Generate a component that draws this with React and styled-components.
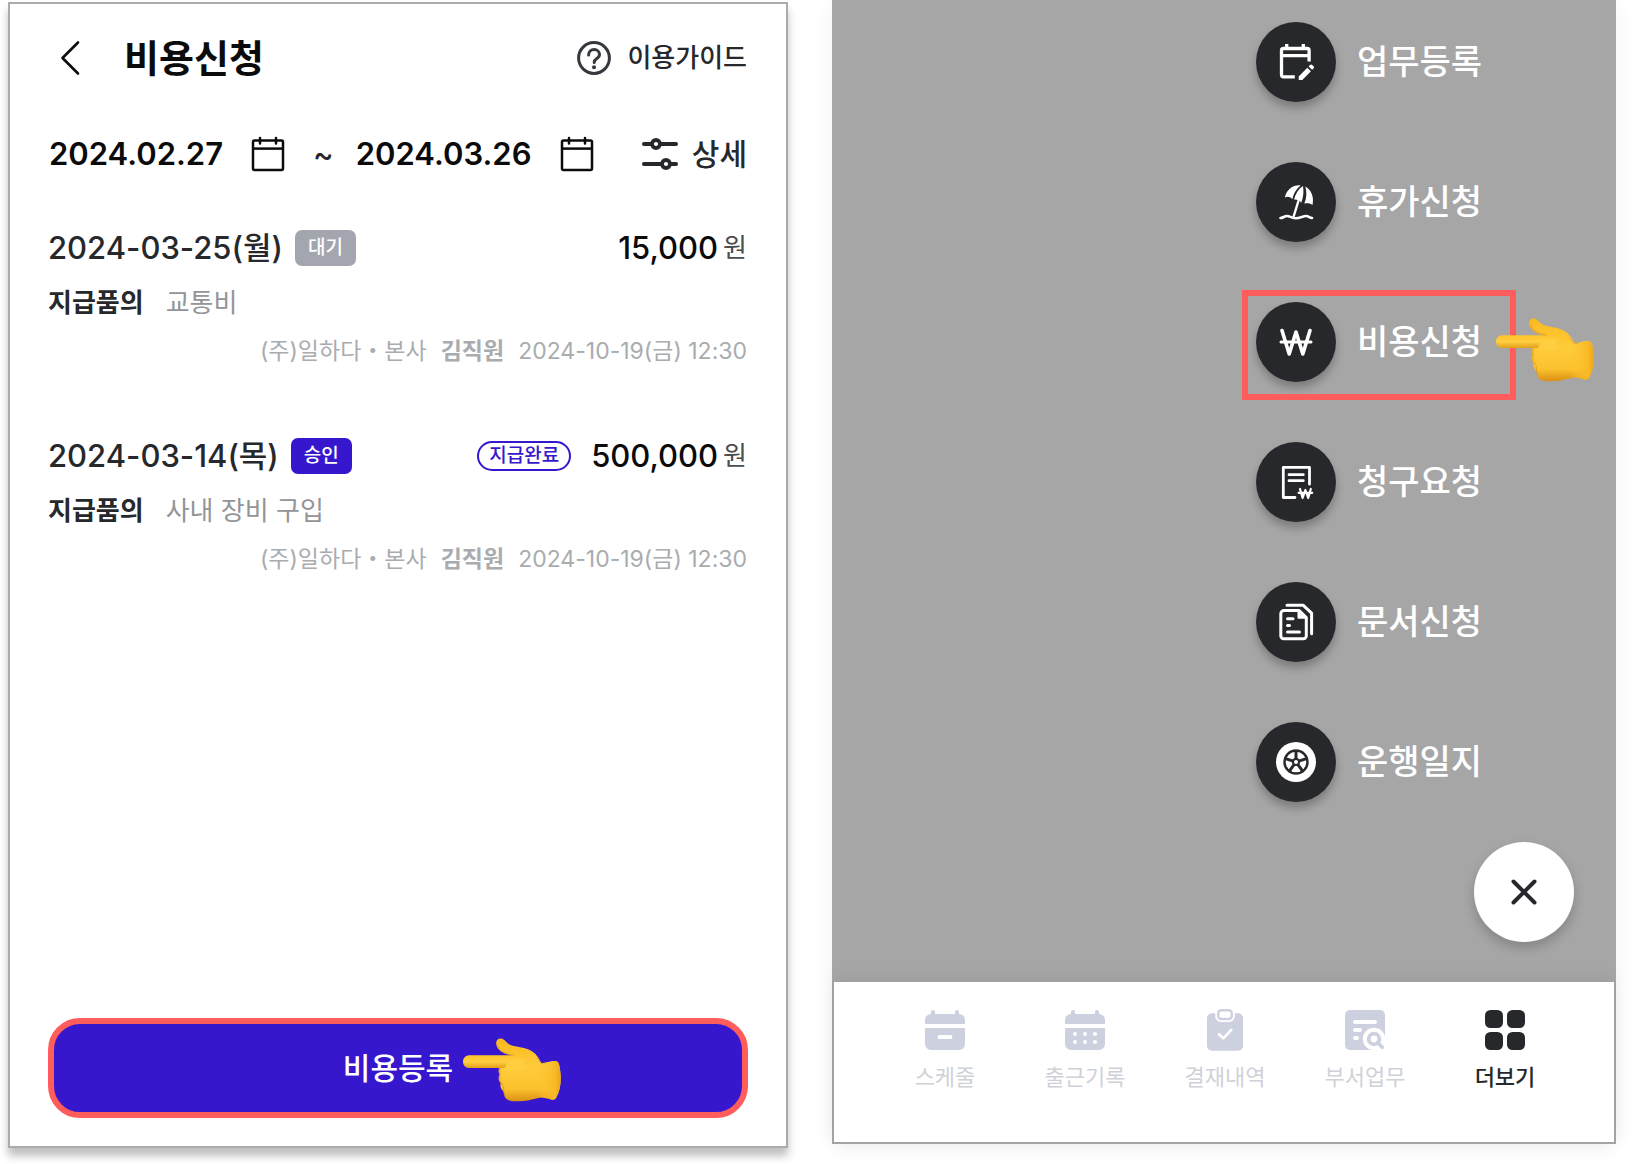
import React from 'react';
import styled, { createGlobalStyle, css } from 'styled-components';

const palette = {
  primary: '#3617ce',
  accent: '#ff5c5c',
  dim: '#a6a6a6',
  line: '#a9abad',
  black: '#0b0b0c',
  ink: '#26282b',
  gray: '#929498',
  grayLight: '#a9acaf',
  badge: '#a3a6af',
  navIcon: '#cdd0df',
  navText: '#cfd1d8',
  white: '#ffffff',
};

const EXPENSES = [
  {
    id: 1,
    date: '2024-03-25(월)',
    status: '대기',
    approved: false,
    paid: false,
    amount: '15,000',
    kind: '지급품의',
    memo: '교통비',
  },
  {
    id: 2,
    date: '2024-03-14(목)',
    status: '승인',
    approved: true,
    paid: true,
    amount: '500,000',
    kind: '지급품의',
    memo: '사내 장비 구입',
  },
];

const MENUS = [
  { label: '업무등록', Icon: TaskIcon },
  { label: '휴가신청', Icon: ParasolIcon },
  { label: '비용신청', Icon: WonIcon, picked: true },
  { label: '청구요청', Icon: BillIcon },
  { label: '문서신청', Icon: DocumentIcon },
  { label: '운행일지', Icon: WheelIcon },
];

const TABS = [
  { label: '스케줄', Icon: ScheduleIcon },
  { label: '출근기록', Icon: AttendanceIcon },
  { label: '결재내역', Icon: ApprovalIcon },
  { label: '부서업무', Icon: TeamWorkIcon },
  { label: '더보기', Icon: MoreIcon, active: true },
];

const App = () => (
  <>
    <GlobalStyle />
    <Page>
      <ExpenseScreen />
      <MenuScreen />
    </Page>
  </>
);

const ExpenseScreen = () => (
  <ExpensePanel>
    <Header>
      <BackButton aria-label="뒤로">
        <svg width="44" height="44" viewBox="0 0 44 44" fill="none" stroke="currentColor" strokeWidth="2.6">
          <path d="M30 6.5 14.5 22 30 37.5" strokeLinecap="round" strokeLinejoin="round" />
        </svg>
      </BackButton>
      <Title>비용신청</Title>
      <GuideButton>
        <GuideIcon />
        이용가이드
      </GuideButton>
    </Header>

    <FilterBar>
      <DateButton>
        2024.02.27
        <CalendarIcon />
      </DateButton>
      <Tilde>~</Tilde>
      <DateButton>
        2024.03.26
        <CalendarIcon />
      </DateButton>
      <DetailButton>
        <SliderIcon />
        상세
      </DetailButton>
    </FilterBar>

    <List>
      {EXPENSES.map((item) => (
        <li key={item.id}>
          <TopRow>
            <DateText>{item.date}</DateText>
            <Badge $approved={item.approved}>{item.status}</Badge>
            <AmountBox>
              {item.paid && <PaidTag>지급완료</PaidTag>}
              <Amount>{item.amount}</Amount>
              <Unit>원</Unit>
            </AmountBox>
          </TopRow>
          <KindRow>
            <strong>{item.kind}</strong>
            {item.memo}
          </KindRow>
          <MetaRow>
            <span>(주)일하다・본사</span>
            <strong>김직원</strong>
            <span>2024-10-19(금) 12:30</span>
          </MetaRow>
        </li>
      ))}
    </List>

    <SubmitButton>
      비용등록
      <SubmitHand>
        <HandIcon id="hand-submit" />
      </SubmitHand>
    </SubmitButton>
  </ExpensePanel>
);

const MenuScreen = () => (
  <MenuPanel>
    <MenuList>
      {MENUS.map(({ label, Icon, picked }) => (
        <MenuItem key={label}>
          <MenuButton $picked={picked}>
            <MenuCircle>
              <Icon />
            </MenuCircle>
            {label}
          </MenuButton>
          {picked && (
            <MenuHand>
              <HandIcon id="hand-menu" />
            </MenuHand>
          )}
        </MenuItem>
      ))}
    </MenuList>
    <CloseButton aria-label="닫기">
      <svg width="40" height="40" viewBox="0 0 40 40" fill="none" stroke="currentColor" strokeWidth="4">
        <path d="M9.500 9.500 30.500 30.500M30.500 9.500 9.500 30.500" strokeLinecap="round" />
      </svg>
    </CloseButton>
    <TabBar>
      {TABS.map(({ label, Icon, active }) => (
        <Tab key={label} $active={active}>
          <Icon />
          <span>{label}</span>
        </Tab>
      ))}
    </TabBar>
  </MenuPanel>
);

// 상단 아이콘
function GuideIcon() {
  return (
    <svg width="34" height="34" viewBox="0 0 34 34" fill="none" stroke="#35383d" strokeWidth="3">
      <circle cx="17" cy="17" r="15.4" />
      <path
        d="M11.6 14c0-3.200 2.400-5.400 5.500-5.400s5.400 2.100 5.400 4.900c0 2.300-1.500 3.300-3 4.300-1.500 1-2.300 1.800-2.300 3.600"
        strokeLinecap="round"
      />
      <circle cx="17" cy="26.200" r="2" fill="#35383d" stroke="none" />
    </svg>
  );
}

function CalendarIcon() {
  return (
    <svg width="34" height="36" viewBox="0 0 34 36" fill="none" stroke="currentColor" strokeWidth="2.500">
      <rect x="2" y="4.500" width="30" height="29.500" rx="1.500" />
      <path d="M2 12.600h30" />
      <path d="M9 2v5.500M25 2v5.500" strokeLinecap="round" />
    </svg>
  );
}

function SliderIcon() {
  return (
    <svg width="36" height="36" viewBox="0 0 36 36" fill="none" stroke="currentColor" strokeWidth="3.800">
      <path d="M1.900 8H9M19 8h15.100M1.900 28H19M29 28h5.100" strokeLinecap="round" />
      <circle cx="14" cy="8" r="4" />
      <circle cx="24" cy="28" r="4" />
    </svg>
  );
}

// 메뉴 아이콘
function TaskIcon() {
  return (
    <svg width="40" height="40" viewBox="0 0 40 40" fill="none" stroke="currentColor" strokeWidth="3.300">
      <path d="M18.800 34.800H7.500a2 2 0 0 1-2-2V8.500a2 2 0 0 1 2-2h23.600a2 2 0 0 1 2 2v11" />
      <path d="M6 13.700h27M10.700 2v5M27.300 2v5" />
      <path
        d="M22.700 38v-3.600l8.600-8.700 3.600 3.500L26.300 38ZM32.600 24.400l1.400-1.400c.7-.7 1.500-.7 2.200 0l1.300 1.300c.7.7.7 1.400 0 2.100L36.100 27.800Z"
        fill="currentColor"
        stroke="none"
      />
    </svg>
  );
}

function ParasolIcon() {
  return (
    <svg width="40" height="40" viewBox="0 0 40 40" fill="currentColor">
      <path d="M8.800 15.500C10.700 7.500 17 2.800 24.500 3.400 20 7 17.300 12 16.300 17.200 14.200 14.800 11.500 14.300 8.800 15.500Z" />
      <path d="M18 17.600C19.500 12 22.300 7 27 4c.9 5.500.4 11-1.700 16.700C23.500 18.400 21 17.300 18 17.600Z" />
      <path d="M29.300 4.400C35.500 8 38.300 15 36.500 22.900 34.300 21.200 31.500 21 28.300 21.600 30.700 16 31 10 29.300 4.400Z" />
      <g fill="none" stroke="currentColor" strokeLinecap="round">
        <path d="M22.400 19 17.800 34" strokeWidth="2.400" />
        <path d="M4.500 36c3 0 3.500-2 6.500-2s4 2.200 8.500 2.200S27 34 30 34s3.500 2 6 2" strokeWidth="2.600" />
      </g>
    </svg>
  );
}

function WonIcon() {
  return (
    <svg
      width="40"
      height="40"
      viewBox="0 0 40 40"
      fill="none"
      stroke="currentColor"
      strokeWidth="3.600"
      strokeLinecap="round"
      strokeLinejoin="round"
    >
      <path d="m6 8.500 7.200 23.500L20 10l6.800 22L34 8.500" />
      <path d="M5 20h30" strokeWidth="3" />
    </svg>
  );
}

function BillIcon() {
  return (
    <svg
      width="40"
      height="40"
      viewBox="0 0 40 40"
      fill="none"
      stroke="currentColor"
      strokeWidth="2.800"
      strokeLinecap="round"
      strokeLinejoin="round"
    >
      <path d="M19 35.500H7.300V5.400h26.200v16.800" />
      <path d="M13 12.700h14.300M13 18.700h14.300" />
      <path d="m24 27 2.600 9 2.800-8 2.800 8 2.600-9M22.600 30.800h13.600" strokeWidth="2.200" />
    </svg>
  );
}

function DocumentIcon() {
  return (
    <svg
      width="40"
      height="40"
      viewBox="0 0 40 40"
      fill="none"
      stroke="currentColor"
      strokeWidth="3"
      strokeLinecap="round"
      strokeLinejoin="round"
    >
      <path d="M11 3.200h16l8.600 7.900V31.800" />
      <path d="M7.800 8.600h15.400l7.100 7v18.200a3 3 0 0 1-3 3H7.800a3 3 0 0 1-3-3V11.600a3 3 0 0 1 3-3Z" />
      <path d="M22.500 9.500v6.300h6.300" fill="currentColor" strokeWidth="2" />
      <path d="M11.500 16.700h5.500M11.500 23.400h2M11.500 29.900h12" />
    </svg>
  );
}

function WheelIcon() {
  return (
    <svg width="40" height="40" viewBox="0 0 40 40">
      <circle cx="20" cy="20" r="20" fill="currentColor" />
      <g stroke="#26282b" fill="none">
        <circle cx="20" cy="20" r="11.500" strokeWidth="2.400" />
        {[0, 72, 144, 216, 288].map((deg) => (
          <path key={deg} d="M20 17V9" strokeWidth="3" transform={`rotate(${deg} 20 20)`} />
        ))}
        <circle cx="20" cy="20" r="3" strokeWidth="2" />
      </g>
    </svg>
  );
}

// 하단 탭 아이콘
function ScheduleIcon() {
  return (
    <svg width="40" height="40" viewBox="0 0 40 40" fill="currentColor">
      <path d="M0 14v-4a6 6 0 0 1 6-6V2a2 2 0 0 1 4 0v2h20V2a2 2 0 0 1 4 0v2a6 6 0 0 1 6 6v4ZM0 18h40v16a6 6 0 0 1-6 6H6a6 6 0 0 1-6-6Z" />
      <rect x="12.700" y="25" width="14.600" height="4" rx="1.500" fill="#fff" />
    </svg>
  );
}

function AttendanceIcon() {
  return (
    <svg width="40" height="40" viewBox="0 0 40 40" fill="currentColor">
      <path d="M0 14v-4a6 6 0 0 1 6-6V2a2 2 0 0 1 4 0v2h20V2a2 2 0 0 1 4 0v2a6 6 0 0 1 6 6v4ZM0 18h40v16a6 6 0 0 1-6 6H6a6 6 0 0 1-6-6Z" />
      <g fill="#fff">
        {[10, 20, 30].map((x) => (
          <React.Fragment key={x}>
            <circle cx={x} cy="24" r="2.100" />
            <circle cx={x} cy="32" r="2.100" />
          </React.Fragment>
        ))}
      </g>
    </svg>
  );
}

function ApprovalIcon() {
  return (
    <svg width="40" height="40" viewBox="0 0 40 40" fill="none" overflow="visible">
      <rect x="2" y="3.300" width="36" height="37.400" rx="5" fill="currentColor" />
      <rect x="10.200" y="-3" width="19.600" height="15" rx="6" fill="#fff" />
      <rect x="13.200" y="0.200" width="13.600" height="8.800" rx="3" stroke="currentColor" strokeWidth="2.400" />
      <path d="m14 24.200 4.300 4.200 8-8.600" stroke="#fff" strokeWidth="2.600" strokeLinecap="round" strokeLinejoin="round" />
    </svg>
  );
}

function TeamWorkIcon() {
  return (
    <svg width="40" height="40" viewBox="0 0 40 40" fill="none">
      <rect width="40" height="40" rx="5" fill="currentColor" />
      <path d="M10 12h20M10 20h5M10 28h2" stroke="#fff" strokeWidth="4" strokeLinecap="round" />
      <circle cx="29" cy="29" r="11.200" fill="#fff" />
      <path d="M30 40h10V30Z" fill="#fff" />
      <circle cx="29" cy="29" r="5.300" stroke="currentColor" strokeWidth="3.800" />
      <path d="m32.500 32.500 4.800 4.800" stroke="currentColor" strokeWidth="3.600" strokeLinecap="round" />
    </svg>
  );
}

function MoreIcon() {
  return (
    <svg width="40" height="40" viewBox="0 0 40 40" fill="currentColor">
      <rect width="18" height="18" rx="5.500" />
      <rect x="22" width="18" height="18" rx="5.500" />
      <rect y="22" width="18" height="18" rx="5.500" />
      <rect x="22" y="22" width="18" height="18" rx="5.500" />
    </svg>
  );
}

// 왼쪽을 가리키는 손
function HandIcon({ id }) {
  return (
    <svg width="98" height="64" viewBox="0 0 294 192" aria-hidden="true">
      <defs>
        <linearGradient id={`${id}-palm`} x1="0" y1="0" x2="0" y2="1">
          <stop offset="0" stopColor="#f9b91f" />
          <stop offset="0.45" stopColor="#ffcb3a" />
          <stop offset="0.8" stopColor="#fcc22e" />
          <stop offset="1" stopColor="#d98f14" />
        </linearGradient>
        <linearGradient id={`${id}-finger`} x1="0" y1="0" x2="0" y2="1">
          <stop offset="0" stopColor="#fdc32a" />
          <stop offset="0.5" stopColor="#ffce42" />
          <stop offset="1" stopColor="#e39f1b" />
        </linearGradient>
        <linearGradient id={`${id}-cuff`} x1="0" y1="0" x2="1" y2="0">
          <stop offset="0" stopColor="#ffc935" stopOpacity="0" />
          <stop offset="0.8" stopColor="#f8b925" />
          <stop offset="1" stopColor="#e8a51c" />
        </linearGradient>
      </defs>
      <path
        d="M100 20C97 6 108-2 119 3c9 4 13 16 30 20 15 4 31 5 44 10 20 7 31 20 42 42 13 0 27-6 42-6 6 0 9 4 11 10 8 34 8 72-9 101-3 4-8 6-13 5-13-3-24-7-36-6-22 5-44 12-74 11-20-1-31-7-32-18-1-5 0-7-2-11-9-7-11-17-9-26-8-8-7-18-3-26-5-8-4-14 0-20l36-38C122 48 103 36 100 20Z"
        fill={`url(#${id}-palm)`}
      />
      <path
        d="M214 84c18 2 42-15 63-15 6 0 9 4 11 10 8 34 8 72-9 101-3 4-8 6-13 5-13-3-24-7-36-6Z"
        fill={`url(#${id}-cuff)`}
      />
      <path d="M18 52h140c16 0 22 8 20 18-3 12-22 20-40 20H18C-6 88-6 54 18 52Z" fill={`url(#${id}-finger)`} />
      <path d="M134 64h50v34h-66c8-6 12-12 16-34Z" fill="#ffcd40" />
      <path d="M104 21c4 17 23 27 48 30" fill="none" stroke="#e6a31d" strokeWidth="4" strokeLinecap="round" opacity="0.7" />
      <path
        d="M112 91c-4 8-4 14 0 21M111 117c-2 10 0 17 8 22M121 145c0 8 0 18 4 25"
        fill="none"
        stroke="#dc9416"
        strokeWidth="4"
        strokeLinecap="round"
        opacity="0.6"
      />
      <path
        d="M222 60c5 7 8 12 13 16 4 2 9 0 14-2"
        fill="none"
        stroke="#dc9a1b"
        strokeWidth="3"
        strokeLinecap="round"
        opacity="0.6"
      />
    </svg>
  );
}

const GlobalStyle = createGlobalStyle`
  * {
    box-sizing: border-box;
  }

  body {
    margin: 0;
    background: ${palette.white};
    font-family: Inter, 'Noto Sans CJK KR', sans-serif;
    color: ${palette.ink};
  }

  button {
    margin: 0;
    padding: 0;
    border: 0;
    background: none;
    font-family: inherit;
    color: inherit;
    cursor: pointer;
  }

  svg {
    display: block;
    flex: none;
  }
`;

const Page = styled.div`
  display: grid;
  grid-template-columns: 780fr 784fr;
  gap: 44px;
  min-height: 100vh;
  padding: 0 18px 0 8px;
`;

const ExpensePanel = styled.main`
  display: flex;
  flex-direction: column;
  margin: 2px 0 16px;
  padding: 0 38px 28px;
  border: 2px solid ${palette.line};
  background: ${palette.white};
  box-shadow: 0 8px 8px rgba(0, 0, 0, 0.25);
`;

const Header = styled.header`
  display: flex;
  align-items: center;
  height: 108px;
  padding-right: 1px;
`;

const BackButton = styled.button`
  color: ${palette.black};
`;

const Title = styled.h1`
  margin: 0 0 0 32px;
  font-size: 38px;
  font-weight: 700;
  line-height: 48px;
  color: ${palette.black};
`;

const GuideButton = styled.button`
  display: flex;
  align-items: center;
  gap: 16px;
  margin-left: auto;
  font-size: 26px;
  font-weight: 500;
  line-height: 36px;
`;

const FilterBar = styled.div`
  display: flex;
  align-items: center;
  height: 84px;
  padding: 0 1px;
`;

const DateButton = styled.button`
  display: flex;
  align-items: center;
  gap: 28px;
  font-size: 31px;
  font-weight: 600;
  line-height: 36px;
  color: ${palette.black};
`;

const Tilde = styled.span`
  margin: 0 22px 0 28px;
  font-size: 31px;
  font-weight: 500;
  line-height: 36px;
`;

const DetailButton = styled.button`
  display: flex;
  align-items: center;
  gap: 14px;
  margin-left: auto;
  font-size: 30px;
  font-weight: 500;
  line-height: 36px;
`;

const List = styled.ul`
  display: flex;
  flex-direction: column;
  gap: 52px;
  margin: 0;
  padding: 22px 0;
  list-style: none;
`;

const TopRow = styled.div`
  display: flex;
  align-items: center;
  height: 60px;
`;

const DateText = styled.span`
  font-size: 31px;
  font-weight: 500;
  line-height: 36px;
`;

const Badge = styled.span`
  margin-left: 12px;
  padding: 0 13px;
  border-radius: 7px;
  background: ${(props) => (props.$approved ? palette.primary : palette.badge)};
  font-size: 19px;
  font-weight: 500;
  line-height: 36px;
  color: ${palette.white};
`;

const AmountBox = styled.div`
  display: flex;
  align-items: center;
  margin-left: auto;
`;

const PaidTag = styled.span`
  margin-right: 20px;
  padding: 0 10px;
  border: 2px solid ${palette.primary};
  border-radius: 15px;
  font-size: 19px;
  font-weight: 500;
  line-height: 26px;
  color: ${palette.primary};
`;

const Amount = styled.span`
  font-size: 31px;
  font-weight: 500;
  line-height: 36px;
  color: ${palette.black};
`;

const Unit = styled.span`
  margin: 0 1px 0 5px;
  font-size: 26px;
  line-height: 36px;
  color: #4b4d50;
`;

const KindRow = styled.div`
  display: flex;
  align-items: center;
  gap: 22px;
  height: 50px;
  font-size: 26px;
  line-height: 36px;
  color: ${palette.gray};

  strong {
    font-weight: 700;
    color: ${palette.ink};
  }
`;

const MetaRow = styled.div`
  display: flex;
  align-items: center;
  justify-content: flex-end;
  gap: 14px;
  height: 46px;
  padding-right: 1px;
  font-size: 23px;
  line-height: 36px;
  color: ${palette.grayLight};

  strong {
    font-weight: 700;
  }
`;

const SubmitButton = styled.button`
  position: relative;
  height: 100px;
  margin-top: auto;
  border: 6px solid ${palette.accent};
  border-radius: 32px;
  background: ${palette.primary};
  font-size: 30px;
  font-weight: 500;
  line-height: 36px;
  color: ${palette.white};
`;

const SubmitHand = styled.span`
  position: absolute;
  top: 14px;
  left: calc(50% + 65px);
`;

const MenuPanel = styled.section`
  display: flex;
  flex-direction: column;
  margin-bottom: 20px;
  border: 2px solid ${palette.dim};
  background: ${palette.dim};
  box-shadow: 0 4px 20px rgba(0, 0, 0, 0.06);
`;

const MenuList = styled.ul`
  display: flex;
  flex-direction: column;
  gap: 60px;
  align-self: flex-end;
  margin: 0;
  padding: 20px 132px 40px 0;
  list-style: none;
`;

const MenuItem = styled.li`
  position: relative;
`;

const MenuButton = styled.button`
  display: flex;
  align-items: center;
  gap: 21px;
  font-size: 34px;
  font-weight: 500;
  line-height: 48px;
  color: ${palette.white};

  ${(props) =>
    props.$picked &&
    css`
      &::after {
        content: '';
        position: absolute;
        top: -12px;
        right: -34px;
        bottom: -18px;
        left: -14px;
        border: 6px solid ${palette.accent};
      }
    `}
`;

const MenuCircle = styled.span`
  display: flex;
  align-items: center;
  justify-content: center;
  width: 80px;
  height: 80px;
  border-radius: 50%;
  background: ${palette.ink};
  box-shadow: 0 6px 8px rgba(0, 0, 0, 0.25);
`;

const MenuHand = styled.span`
  position: absolute;
  top: 16px;
  right: -112px;
`;

const CloseButton = styled.button`
  display: flex;
  align-items: center;
  justify-content: center;
  align-self: flex-end;
  width: 100px;
  height: 100px;
  margin: auto 40px 40px 0;
  border-radius: 50%;
  background: ${palette.white};
  box-shadow: 0 6px 12px rgba(0, 0, 0, 0.2);
`;

const TabBar = styled.nav`
  display: grid;
  grid-template-columns: repeat(5, 1fr);
  align-items: start;
  height: 160px;
  padding: 28px 39px 0 41px;
  background: ${palette.white};
  box-shadow: 0 -4px 16px rgba(0, 0, 0, 0.06);
`;

const Tab = styled.button`
  display: flex;
  flex-direction: column;
  align-items: center;
  gap: 11px;
  font-size: 22px;
  line-height: 32px;
  color: ${(props) => (props.$active ? palette.ink : palette.navIcon)};

  span {
    font-weight: ${(props) => (props.$active ? 500 : 400)};
    color: ${(props) => (props.$active ? palette.ink : palette.navText)};
  }
`;

export default App;
